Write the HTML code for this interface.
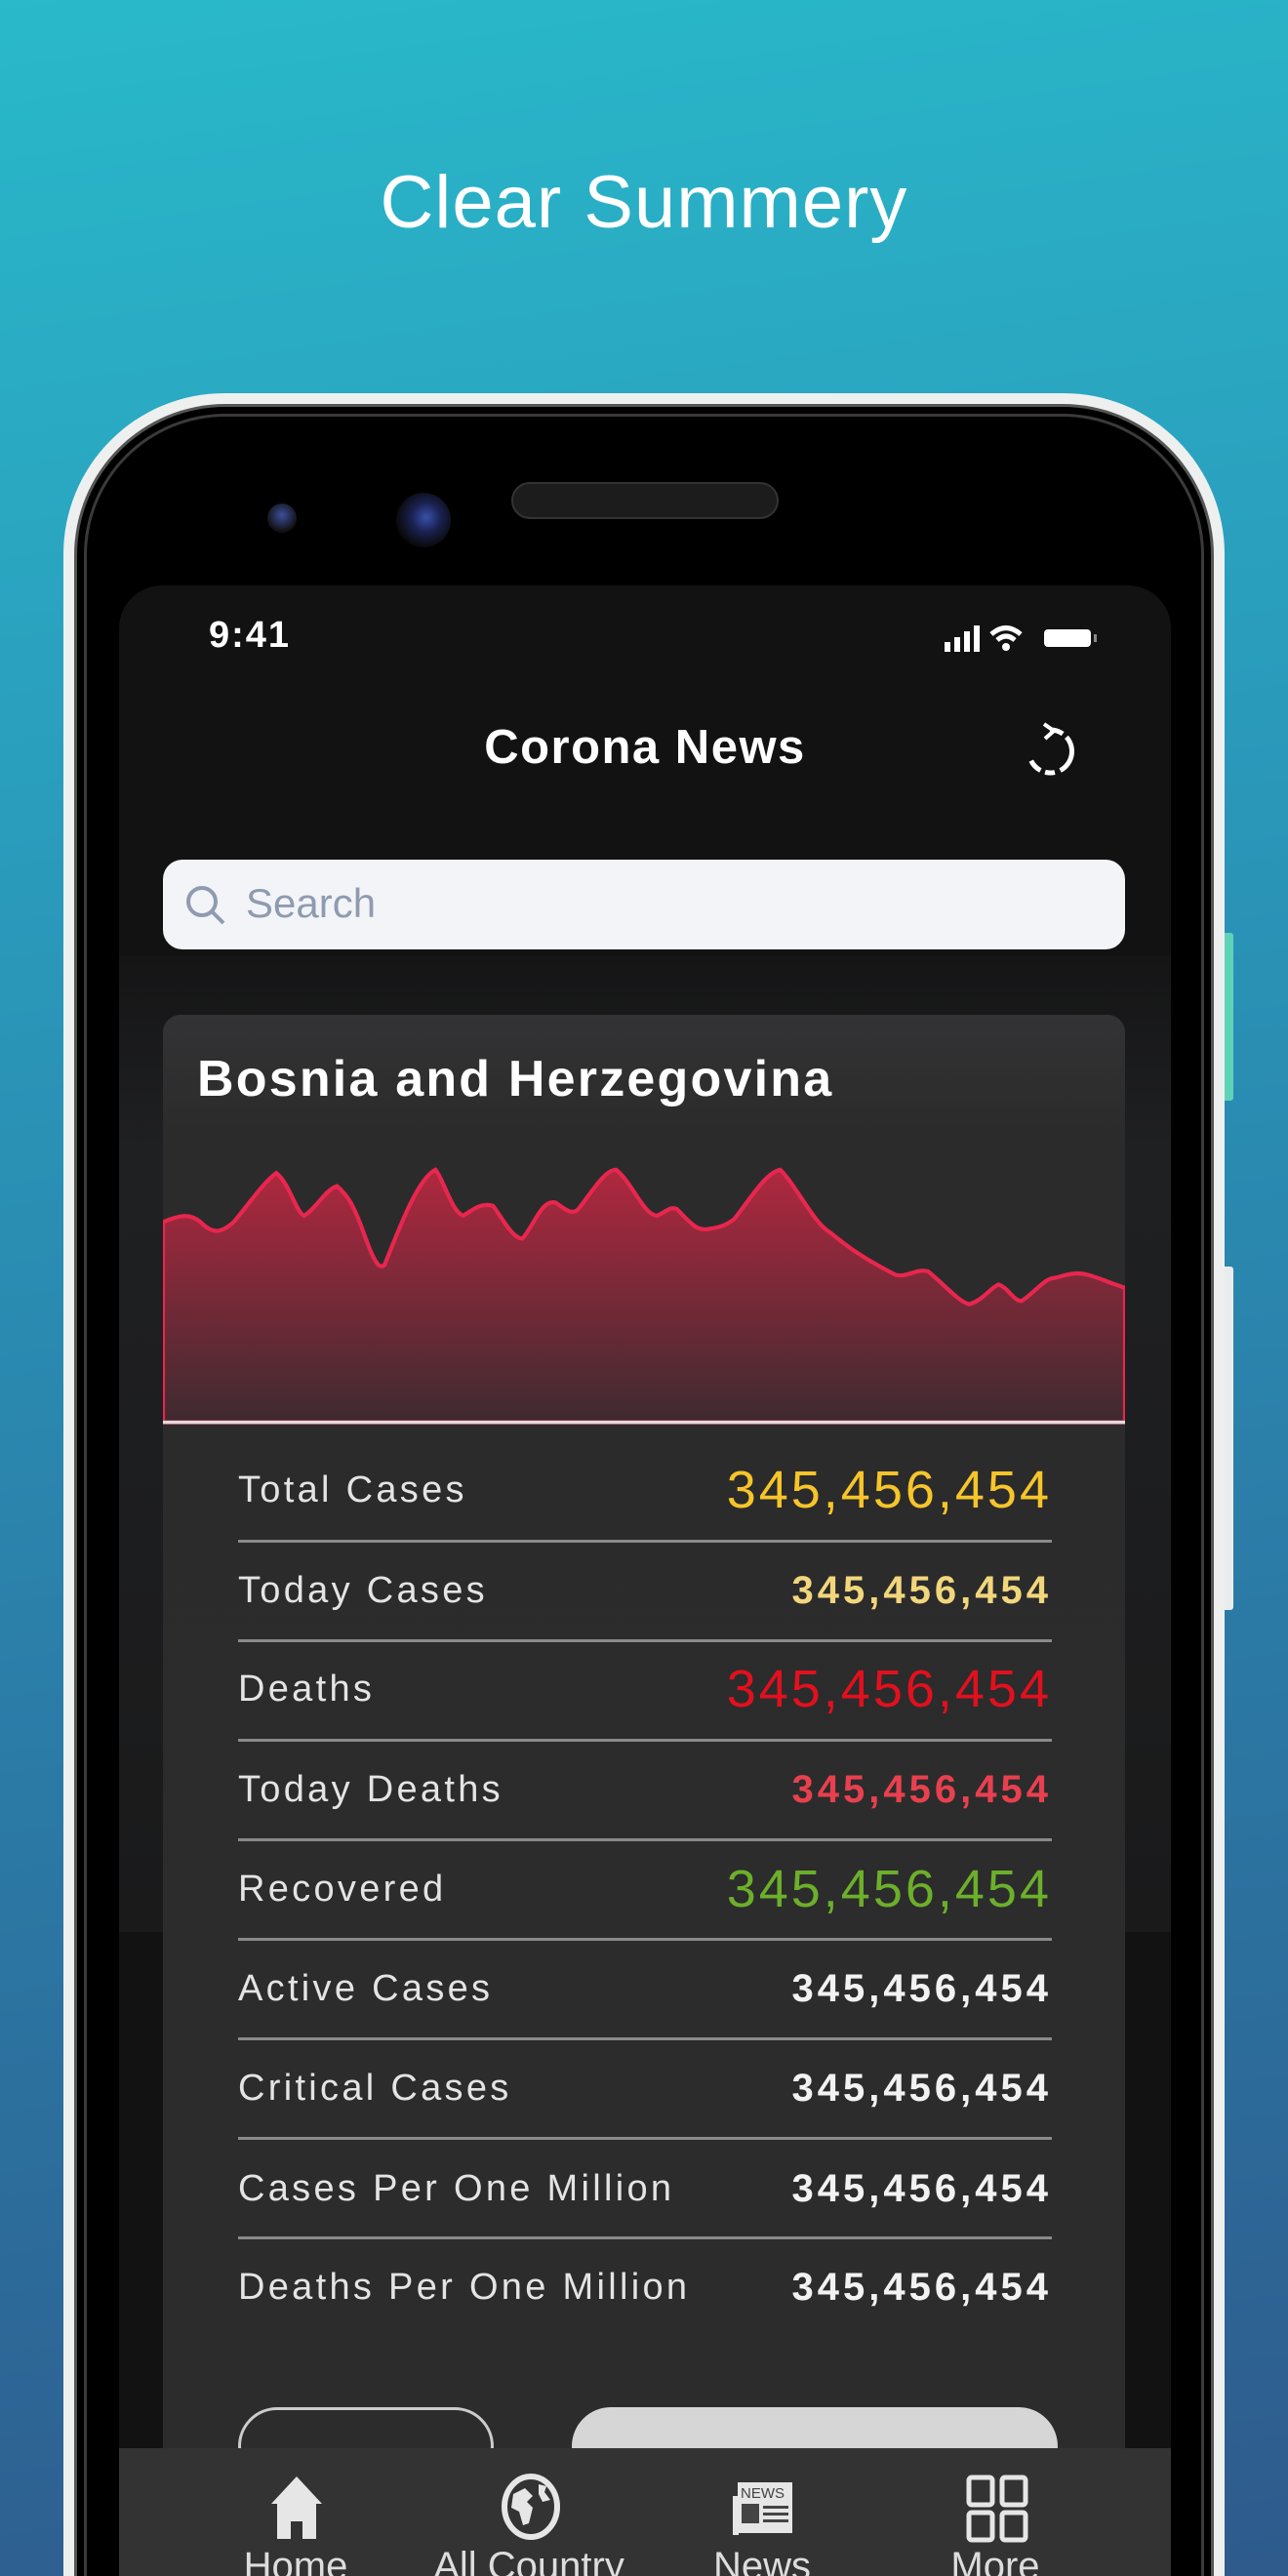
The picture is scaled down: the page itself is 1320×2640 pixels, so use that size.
<!DOCTYPE html>
<html><head><meta charset="utf-8"><style>
*{margin:0;padding:0;box-sizing:border-box}
html,body{width:1320px;height:2640px;overflow:hidden}
body{position:relative;font-family:"Liberation Sans",sans-serif;background:linear-gradient(172deg,#29b9ca 0%,#2a9cbc 30%,#2b7aa6 65%,#2e5a8c 100%)}
.abs{position:absolute}
.title{left:0;width:1320px;top:164px;text-align:center;color:#fff;font-size:76px;letter-spacing:1px}
.outer{left:65px;top:403px;width:1190px;height:2237px;background:#eef0f0;border-radius:165px 165px 0 0}
.bez{left:76px;top:414px;width:1168px;height:2226px;background:#000;border-radius:155px 155px 0 0;border:3px solid #555;border-bottom:none}
.bez2{left:86px;top:424px;width:1148px;height:2216px;border-radius:145px 145px 0 0;border:3px solid #3a3a3a;border-bottom:none}
.screen{left:122px;top:600px;width:1078px;height:2040px;background:#121212;border-radius:44px 44px 0 0;overflow:hidden}
.row{position:absolute;left:122px;width:834px;height:102px;display:flex;align-items:center;justify-content:space-between}
.lab{color:#e4e4e4;font-size:38px;letter-spacing:3.3px}
.big{font-size:54px;letter-spacing:3px}
.sm{font-size:40px;font-weight:bold;letter-spacing:4px}
.div{position:absolute;left:122px;width:834px;height:3px;background:#8a8a8a}
.tab{position:absolute;text-align:center;color:#ddd;font-size:40px}
</style></head><body>
<div class="abs title">Clear Summery</div>
<div class="abs" style="left:1252px;top:956px;width:12px;height:172px;background:#5fd3b8;border-radius:3px"></div>
<div class="abs" style="left:1252px;top:1298px;width:12px;height:352px;background:#e9ecec;border-radius:3px"></div>
<div class="abs outer"></div>
<div class="abs bez"></div>
<div class="abs bez2"></div>
<div class="abs" style="left:524px;top:494px;width:274px;height:38px;background:#1c1c1c;border-radius:20px;border:2px solid #333"></div>
<div class="abs" style="left:274px;top:516px;width:30px;height:30px;border-radius:50%;background:radial-gradient(circle at 50% 40%,#3b4f9a 0,#111 70%)"></div>
<div class="abs" style="left:406px;top:505px;width:56px;height:56px;border-radius:50%;background:radial-gradient(circle at 55% 45%,#3850a8 0,#1a2150 35%,#0a0a0a 70%)"></div>

<div class="abs screen">
 <div class="abs" style="left:0;top:380px;width:1078px;height:1000px;background:linear-gradient(#151516,#1f2022 20%,#1a1a1b)"></div>
 <div class="abs" style="left:92px;top:30px;color:#fff;font-size:38px;font-weight:bold;letter-spacing:2px">9:41</div>
 <svg class="abs" style="left:846px;top:38px" width="164" height="34" viewBox="0 0 164 34">
  <rect x="0" y="20" width="6" height="10" fill="#fff"/><rect x="10" y="15" width="6" height="15" fill="#fff"/><rect x="20" y="9" width="6" height="21" fill="#fff"/><rect x="30" y="3" width="6" height="27" fill="#fff"/>
  <path d="M48 12 Q63 -1 78 12" stroke="#fff" stroke-width="5" fill="none"/><path d="M54 18 Q63 10 72 18" stroke="#fff" stroke-width="5" fill="none"/><circle cx="63" cy="25" r="4" fill="#fff"/>
  <rect x="102" y="7" width="48" height="18" rx="4" fill="#fff"/><rect x="153" y="12" width="3" height="8" fill="#888"/>
 </svg>
 <div class="abs" style="left:0;width:1078px;top:138px;text-align:center;color:#fff;font-size:49px;font-weight:bold;letter-spacing:1.5px">Corona News</div>
 <svg class="abs" style="left:924px;top:140px" width="60" height="60" viewBox="0 0 60 60">
  <path d="M30 8 A22 22 0 1 1 10 38" stroke="#fff" stroke-width="5" fill="none" stroke-dasharray="14 5 40 6 10 5"/><path d="M24 2 L34 9 L25 17" stroke="#fff" stroke-width="4" fill="none"/>
 </svg>
 <div class="abs" style="left:45px;top:281px;width:986px;height:92px;background:#f3f4f8;border-radius:20px"></div>
 <svg class="abs" style="left:66px;top:305px" width="46" height="46" viewBox="0 0 46 46"><circle cx="19" cy="19" r="14" stroke="#8e9bb0" stroke-width="4" fill="none"/><path d="M29 29 L41 41" stroke="#8e9bb0" stroke-width="4"/></svg>
 <div class="abs" style="left:130px;top:302px;color:#8e9bb0;font-size:42px">Search</div>

 <div class="abs" style="left:45px;top:440px;width:986px;height:1700px;background:linear-gradient(#333335 0,#2b2b2b 120px,#2c2c2c);border-radius:18px 18px 0 0"></div>
 <div class="abs" style="left:80px;top:476px;color:#fff;font-size:52px;font-weight:bold;letter-spacing:2.2px">Bosnia and Herzegovina</div>
 <svg class="abs" style="left:45px;top:582px" width="986" height="279" viewBox="99 700 586 166" preserveAspectRatio="none">
  <defs><linearGradient id="g" x1="0" y1="0" x2="0" y2="1"><stop offset="0" stop-color="#b0283f"/><stop offset="1" stop-color="#3e2a30"/></linearGradient></defs>
  <path d="M99 742 C108 738 115 736 122 742 C130 750 135 748 142 742 C152 730 160 718 168 712 C176 718 180 736 185 738 C192 734 198 722 205 720 C212 726 215 732 220 745 C226 762 230 772 234 768 C245 740 255 715 265 710 C270 716 275 736 282 738 C288 734 293 730 300 732 C306 740 312 752 318 752 C326 742 330 728 338 730 C344 734 348 738 352 734 C360 724 368 710 375 710 C385 718 392 738 400 738 C405 736 408 732 412 734 C420 742 424 748 432 746 C438 745 442 744 447 740 C458 726 466 712 475 710 C485 720 495 742 505 748 C515 756 522 762 545 774 C552 776 558 770 565 772 C575 780 583 790 590 792 C598 790 603 782 608 780 C614 782 617 790 622 790 C630 785 636 776 642 776 C650 774 655 772 662 774 C670 776 678 780 685 782 L685 864 L99 864Z" fill="url(#g)" stroke="#e8264e" stroke-width="2.5"/>
  <rect x="99" y="863" width="586" height="2" fill="#ddd"/>
 </svg>

 <div class="row" style="top:876px"><span class="lab">Total Cases</span><span class="big" style="color:#f6c52a">345,456,454</span></div>
 <div class="div" style="top:978px"></div>
 <div class="row" style="top:979px"><span class="lab">Today Cases</span><span class="sm" style="color:#f2d67c">345,456,454</span></div>
 <div class="div" style="top:1080px"></div>
 <div class="row" style="top:1080px"><span class="lab">Deaths</span><span class="big" style="color:#e2101e">345,456,454</span></div>
 <div class="div" style="top:1182px"></div>
 <div class="row" style="top:1183px"><span class="lab">Today Deaths</span><span class="sm" style="color:#e8404f">345,456,454</span></div>
 <div class="div" style="top:1284px"></div>
 <div class="row" style="top:1285px"><span class="lab">Recovered</span><span class="big" style="color:#6caf2b">345,456,454</span></div>
 <div class="div" style="top:1386px"></div>
 <div class="row" style="top:1387px"><span class="lab">Active Cases</span><span class="sm" style="color:#f2f2f2">345,456,454</span></div>
 <div class="div" style="top:1488px"></div>
 <div class="row" style="top:1489px"><span class="lab">Critical Cases</span><span class="sm" style="color:#f2f2f2">345,456,454</span></div>
 <div class="div" style="top:1590px"></div>
 <div class="row" style="top:1592px"><span class="lab">Cases Per One Million</span><span class="sm" style="color:#f2f2f2">345,456,454</span></div>
 <div class="div" style="top:1692px"></div>
 <div class="row" style="top:1693px"><span class="lab">Deaths Per One Million</span><span class="sm" style="color:#f2f2f2">345,456,454</span></div>

 <div class="abs" style="left:122px;top:1867px;width:262px;height:80px;border:3px solid #ccc;border-radius:40px"></div>
 <div class="abs" style="left:464px;top:1867px;width:498px;height:80px;background:#d6d6d6;border-radius:40px"></div>

 <div class="abs" style="left:0;top:1909px;width:1078px;height:200px;background:#333"></div>
 <svg class="abs" style="left:150px;top:1936px" width="64" height="68" viewBox="0 0 64 68"><path d="M32 2 L58 30 L52 30 L52 66 L38 66 L38 48 L26 48 L26 66 L12 66 L12 30 L6 30Z" fill="#e6e6e6"/></svg>
 <svg class="abs" style="left:390px;top:1934px" width="64" height="70" viewBox="0 0 64 70"><ellipse cx="32" cy="35" rx="27" ry="31" stroke="#e6e6e6" stroke-width="6" fill="none"/><path d="M14 22 L26 16 L34 24 L28 30 L34 36 L30 52 L24 54 L20 40 L12 36Z M40 12 L48 14 L46 20 L52 28 L44 30 L40 22Z" fill="#e6e6e6"/></svg>
 <svg class="abs" style="left:628px;top:1942px" width="66" height="58" viewBox="0 0 66 58"><rect x="6" y="2" width="56" height="52" fill="#e6e6e6"/><rect x="1" y="16" width="6" height="40" fill="#e6e6e6"/><text x="9" y="18" font-size="15" font-family="Liberation Sans" fill="#444">NEWS</text><rect x="10" y="24" width="18" height="20" fill="#444"/><rect x="32" y="26" width="26" height="3" fill="#444"/><rect x="32" y="33" width="26" height="3" fill="#444"/><rect x="32" y="40" width="26" height="3" fill="#444"/></svg>
 <svg class="abs" style="left:868px;top:1936px" width="64" height="70" viewBox="0 0 64 70"><g fill="none" stroke="#e6e6e6" stroke-width="5"><rect x="3" y="3" width="24" height="28" rx="3"/><rect x="37" y="3" width="24" height="28" rx="3"/><rect x="3" y="39" width="24" height="28" rx="3"/><rect x="37" y="39" width="24" height="28" rx="3"/></g></svg>
 <div class="tab" style="left:81px;width:200px;top:2008px">Home</div>
 <div class="tab" style="left:300px;width:240px;top:2008px">All Country</div>
 <div class="tab" style="left:559px;width:200px;top:2008px">News</div>
 <div class="tab" style="left:798px;width:200px;top:2008px">More</div>
</div>
</body></html>
